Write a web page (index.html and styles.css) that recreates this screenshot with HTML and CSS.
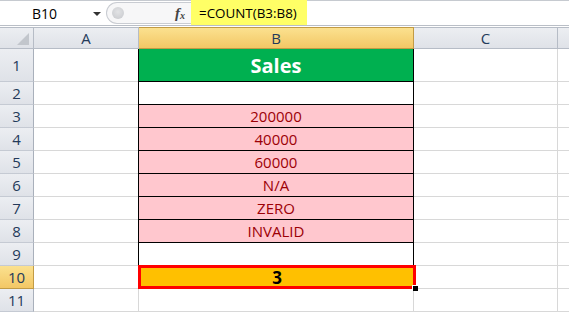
FILE: index.html
```html
<!DOCTYPE html>
<html>
<head>
<meta charset="utf-8">
<link rel="stylesheet" href="styles.css">
</head>
<body>
<div class="fbar">
  <div class="namebox"><span class="nametext">B10</span><span class="arrow"></span></div>
  <div class="grip"><span class="dot"></span><span class="fx">f<sub>x</sub></span></div>
  <div class="formula"><span class="ftext">=COUNT(B3:B8)</span></div>
</div>
<div class="sheet">
  <div class="corner"><span class="tri"></span></div>
  <div class="ch">A</div>
  <div class="ch sel">B</div>
  <div class="ch">C</div>
  <div class="ch last"></div>

  <div class="rh tall">1</div><div class="c"></div><div class="b green">Sales</div><div class="c"></div><div class="c last"></div>
  <div class="rh">2</div><div class="c"></div><div class="b"></div><div class="c"></div><div class="c last"></div>
  <div class="rh">3</div><div class="c"></div><div class="b pink">200000</div><div class="c"></div><div class="c last"></div>
  <div class="rh">4</div><div class="c"></div><div class="b pink">40000</div><div class="c"></div><div class="c last"></div>
  <div class="rh">5</div><div class="c"></div><div class="b pink">60000</div><div class="c"></div><div class="c last"></div>
  <div class="rh">6</div><div class="c"></div><div class="b pink">N/A</div><div class="c"></div><div class="c last"></div>
  <div class="rh">7</div><div class="c"></div><div class="b pink">ZERO</div><div class="c"></div><div class="c last"></div>
  <div class="rh">8</div><div class="c"></div><div class="b pink">INVALID</div><div class="c"></div><div class="c last"></div>
  <div class="rh">9</div><div class="c"></div><div class="b"></div><div class="c"></div><div class="c last"></div>
  <div class="rh sel">10</div><div class="c"></div><div class="b result">3<span class="handle"></span></div><div class="c"></div><div class="c last"></div>
  <div class="rh">11</div><div class="c"></div><div class="c"></div><div class="c"></div><div class="c last"></div>
</div>
</body>
</html>
```
FILE: styles.css
```css
html, body {
  margin: 0;
  padding: 0;
  background: #ffffff;
  overflow: hidden;
}
body {
  width: 569px;
  height: 313px;
  font-family: "Open Sans", "Liberation Sans", sans-serif;
}
.fbar {
  display: flex;
  height: 24px;
  border-top: 1px solid #c6cad0;
  border-bottom: 1px solid #b9bec6;
  background: #ffffff;
  margin-bottom: 1px;
}
.namebox {
  width: 106px;
  display: flex;
  align-items: center;
  position: relative;
  font-size: 14px;
  color: #000;
}
.nametext {
  margin-left: 32px;
}
.arrow {
  position: absolute;
  left: 93px;
  top: 11px;
  width: 0;
  height: 0;
  border-left: 4px solid transparent;
  border-right: 4px solid transparent;
  border-top: 4px solid #333;
}
.grip {
  width: 84px;
  display: flex;
  align-items: center;
  background: #f7f7f8;
  border: 1px solid #c9ccd2;
  border-right: none;
  border-radius: 11px 0 0 11px;
  margin: 1px 0 1px 0;
  position: relative;
}
.dot {
  width: 12px;
  height: 12px;
  border-radius: 50%;
  background: radial-gradient(circle at 50% 40%, #e2e3e5, #c6c8cc);
  margin-left: 5px;
}
.fx {
  margin-left: auto;
  margin-right: 6px;
  font-family: "Liberation Serif", serif;
  font-style: italic;
  font-weight: bold;
  font-size: 15px;
  color: #444;
}
.fx sub {
  font-size: 10px;
  vertical-align: -1px;
}
.formula {
  flex: 1;
  display: flex;
  align-items: center;
}
.ftext {
  background: #ffff66;
  height: 24px;
  line-height: 24px;
  padding: 0 10px 0 8px;
  font-size: 13.4px;
  margin-top: -1px;
  padding-top: 1px;
}
.sheet {
  display: grid;
  grid-template-columns: 34px 105px 275px 144px 11px;
  grid-template-rows: 22px 33px repeat(10, 23px);
}
.corner, .ch, .rh {
  background: linear-gradient(#eceef2, #dfe2e8);
  color: #243a5a;
  display: flex;
  align-items: center;
  justify-content: center;
  font-size: 15px;
  box-sizing: border-box;
  border-right: 1px solid #b6bcc6;
  border-bottom: 1px solid #b6bcc6;
}
.corner {
  position: relative;
  border-top: 1px solid #b6bcc6;
}
.ch {
  border-top: 1px solid #b6bcc6;
}
.tri {
  position: absolute;
  right: 4px;
  bottom: 3px;
  width: 0;
  height: 0;
  border-left: 12px solid transparent;
  border-bottom: 12px solid #c2c6cc;
}
.rh {
  border-right: 1px solid #a9b0bb;
  border-bottom: 1px solid #c5cad3;
}
.ch.sel, .rh.sel {
  background: linear-gradient(#fbe18f, #f3c765);
  border-color: #c29b45;
}
.c {
  box-sizing: border-box;
  border-right: 1px solid #d8d8d8;
  border-bottom: 1px solid #d8d8d8;
}
.last {
  border-right: none;
}
.b {
  box-sizing: border-box;
  border-right: 1px solid #000;
  border-bottom: 1px solid #000;
  border-left: 1px solid #000;
  margin-left: -1px;
  display: flex;
  align-items: center;
  justify-content: center;
  font-size: 15px;
}
.green {
  background: #00b050;
  color: #ffffff;
  font-weight: bold;
  font-size: 20px;
}
.pink {
  background: #ffc7ce;
  color: #9c0006;
}
.result {
  background: #ffc000;
  border: 3px solid #ff0000;
  margin: -1px -2px 0 -1px;
  font-weight: bold;
  font-size: 17px;
  color: #000;
  position: relative;
}
.handle {
  position: absolute;
  right: -5px;
  bottom: -5px;
  width: 5px;
  height: 5px;
  background: #000;
  border: 1px solid #fff;
  border-width: 1px 0 0 1px;
}
```
